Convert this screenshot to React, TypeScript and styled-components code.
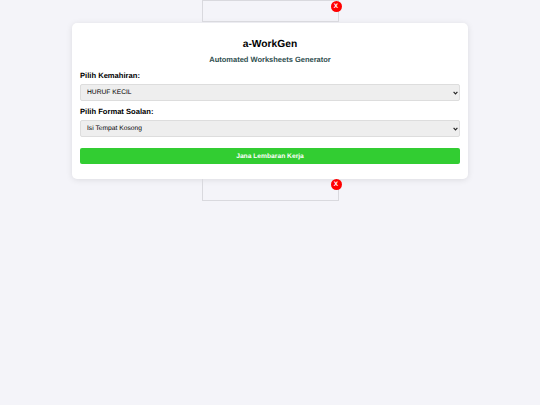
import React from 'react';
import styled, { createGlobalStyle } from 'styled-components';

const GlobalStyle = createGlobalStyle`
  html, body {
    margin: 0;
    padding: 0;
    background: #f4f4f9;
    font-family: "Liberation Sans", Arial, sans-serif;
  }

  * {
    text-rendering: geometricPrecision;
  }
`;

const Page = styled.div`
  display: flex;
  flex-direction: column;
  align-items: center;
  min-height: 405px;
`;

const AdSlot = styled.div<{ $top?: boolean }>`
  position: relative;
  box-sizing: border-box;
  width: 137px;
  height: 22px;
  border: 1px solid #d9d9de;
  border-top-width: ${({ $top }) => ($top ? '1px' : '0')};
  margin-bottom: ${({ $top }) => ($top ? '1px' : '0')};
`;

const CloseButton = styled.button`
  position: absolute;
  top: 0;
  right: -4px;
  width: 11px;
  height: 11px;
  padding: 0;
  border: 0;
  border-radius: 50%;
  background: #f00;
  color: #fff;
  font: bold 6.5px "Liberation Sans", Arial, sans-serif;
  line-height: 11px;
  text-align: center;
`;

const Card = styled.main`
  box-sizing: border-box;
  width: 396px;
  height: 156px;
  padding: 15px 8px 0;
  background: #fff;
  border-radius: 5px;
  box-shadow: 0 1px 6px rgba(0, 0, 0, 0.1);
`;

const Title = styled.h1`
  margin: 0;
  font-size: 10.25px;
  line-height: 13px;
  text-align: center;
  color: #000;
`;

const Subtitle = styled.h2`
  margin: 4px 0 0;
  font-size: 7.5px;
  line-height: 10px;
  text-align: center;
  color: #2f4f4f;
`;

const Label = styled.label`
  display: block;
  margin-top: 5px;
  font-size: 7.6px;
  font-weight: bold;
  line-height: 11px;
  color: #000;
`;

const SelectWrap = styled.div`
  position: relative;
  margin-top: 3px;
`;

const Select = styled.select`
  display: block;
  box-sizing: border-box;
  width: 100%;
  height: 17px;
  padding: 0 6px;
  appearance: none;
  background-color: #eee;
  border: 1px solid #ddd;
  border-radius: 2px;
  color: #000;
  font: 6.7px "Liberation Sans", Arial, sans-serif;
`;

const Chevron = styled.svg`
  position: absolute;
  top: 7px;
  right: 2px;
  width: 5px;
  height: 4px;
  pointer-events: none;
`;

const SubmitButton = styled.button`
  display: block;
  width: 100%;
  height: 16px;
  margin-top: 11px;
  padding: 0;
  background: #32cd32;
  border: 0;
  border-radius: 2px;
  color: #fff;
  font: bold 6.7px "Liberation Sans", Arial, sans-serif;
`;

const Dropdown = ({ id, options }: { id: string; options: string[] }) => (
  <SelectWrap>
    <Select id={id} defaultValue={options[0]}>
      {options.map((option) => (
        <option key={option}>{option}</option>
      ))}
    </Select>
    <Chevron viewBox="0 0 5 4">
      <path d="M0.6 0.8 L2.5 2.9 L4.4 0.8" fill="none" stroke="#222" strokeWidth="1.1" />
    </Chevron>
  </SelectWrap>
);

const App = () => (
  <Page>
    <GlobalStyle />
    <AdSlot $top>
      <CloseButton>X</CloseButton>
    </AdSlot>
    <Card>
      <Title>a-WorkGen</Title>
      <Subtitle>Automated Worksheets Generator</Subtitle>
      <Label htmlFor="skill">Pilih Kemahiran:</Label>
      <Dropdown id="skill" options={['HURUF KECIL', 'HURUF BESAR']} />
      <Label htmlFor="format">Pilih Format Soalan:</Label>
      <Dropdown id="format" options={['Isi Tempat Kosong', 'Padankan']} />
      <SubmitButton>Jana Lembaran Kerja</SubmitButton>
    </Card>
    <AdSlot>
      <CloseButton>X</CloseButton>
    </AdSlot>
  </Page>
);

export default App;
